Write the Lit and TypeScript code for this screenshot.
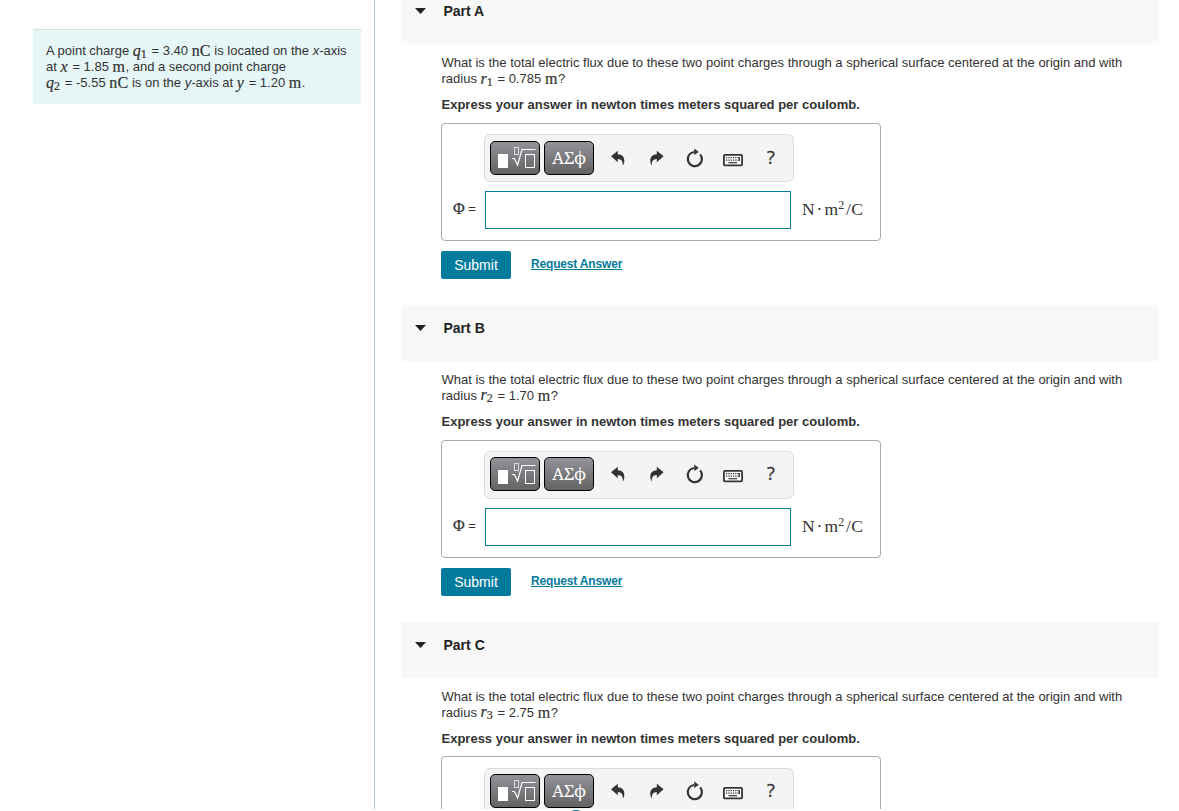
import { LitElement, html, css, svg } from 'lit';
import { customElement, property } from 'lit/decorators.js';

interface Part {
  letter: string;
  index: number;
  radius: string;
}

const PARTS: Part[] = [
  { letter: 'A', index: 1, radius: '0.785' },
  { letter: 'B', index: 2, radius: '1.70' },
  { letter: 'C', index: 3, radius: '2.75' },
];

// toolbar glyphs, all on a 24x24 grid
const ICONS = {
  undo: svg`<path d="M5 10.3 11.8 4.8V8.2C16.2 8.4 18.6 11.2 18.3 15.2 18.2 17 17.7 18.6 16.8 19.6 17 15.4 15.6 13.2 11.8 13V16.2Z" />`,
  redo: svg`<path d="M19.6 10.3 12.8 4.8V8.2C8.4 8.4 6 11.2 6.3 15.2 6.4 17 6.9 18.6 7.8 19.6 7.6 15.4 9 13.2 12.8 13V16.2Z" />`,
  reset: svg`
    <path d="M18.2 8.4A7.1 7.1 0 1 1 12 6" fill="none" stroke="#333" stroke-width="2.2" />
    <path d="M12.2 2.6 16.8 5.9 12.2 9Z" />`,
  keyboard: svg`
    <rect x="2.9" y="8.9" width="18.2" height="10.4" rx="1" fill="#fff" stroke="#333" stroke-width="1.8" />
    <path d="M5 11.7H19M5 14.1H19" stroke="#333" stroke-width="1.2" stroke-dasharray="1.3 1" />
    <path d="M7.5 16.7H16" stroke="#333" stroke-width="1.2" />
    <path d="M18.4 11V15" stroke="#333" stroke-width="1.2" />`,
};

const math = css`
  .math {
    font-family: 'Liberation Serif', serif;
    font-size: 16px;
    line-height: 10px;
    vertical-align: -0.6px;
    -webkit-text-stroke: 0.2px currentColor;
  }
  .math.var {
    padding-right: 1.2px;
  }
  .math.unit-name {
    letter-spacing: 0.2px;
  }
  .math.m {
    letter-spacing: 0.5px;
  }
  .math sub {
    font-size: 12px;
    line-height: 0;
    vertical-align: -2px;
  }
`;

@customElement('math-toolbar')
export class MathToolbar extends LitElement {
  static styles = css`
    :host {
      display: flex;
      box-sizing: border-box;
      width: 310px;
      height: 48px;
      padding: 5.6px 5px;
      border: 1px solid #ddd;
      border-radius: 6px;
      background: #f4f4f4;
    }
    .key {
      box-sizing: border-box;
      flex: none;
      width: 50px;
      height: 34px;
      margin-right: 4px;
      padding: 0;
      border: 1px solid #000;
      border-radius: 5px;
      background: linear-gradient(#92929a, #636363);
      color: #fff;
      font: 17px/30px 'Noto Serif', 'Liberation Serif', serif;
      letter-spacing: -0.2px;
      text-align: center;
    }
    .key svg {
      display: block;
    }
    .tool {
      flex: none;
      width: 38.2px;
      height: 34px;
      display: flex;
      align-items: center;
      justify-content: center;
      color: #333;
      font: 18px 'Open Sans', 'Noto Sans', sans-serif;
    }
    .tool svg {
      fill: #333;
    }
    .tool.first {
      margin-left: 1px;
    }
    .tool.help {
      height: 32px;
      -webkit-text-stroke: 0.3px #333;
    }
  `;

  renderTool(name: keyof typeof ICONS, first = false) {
    return html`<div class="tool ${first ? 'first' : ''}">
      <svg width="24" height="24" viewBox="0 0 24 24">${ICONS[name]}</svg>
    </div>`;
  }

  render() {
    return html`
      <button class="key" aria-label="Templates">
        <svg width="48" height="32" viewBox="0 0 48 32">
          <rect x="7" y="12" width="10" height="14" fill="#fff" />
          <g fill="none" stroke="#fff">
            <rect x="23.5" y="5.5" width="4" height="7" stroke="#ddd" />
            <path d="M21 16.5H23.4L26.6 23 31 7.5H44.5" stroke-width="1.2" />
            <rect x="34.5" y="12.5" width="9" height="13" />
          </g>
        </svg>
      </button>
      <button class="key">ΑΣϕ</button>
      ${this.renderTool('undo', true)} ${this.renderTool('redo')}
      ${this.renderTool('reset')} ${this.renderTool('keyboard')}
      <div class="tool help">?</div>
    `;
  }
}

@customElement('question-part')
export class QuestionPart extends LitElement {
  @property({ attribute: false }) part!: Part;

  static styles = [
    math,
    css`
      :host {
        display: block;
        height: 316.8px;
        color: #333;
      }
      .header {
        display: flex;
        align-items: center;
        box-sizing: border-box;
        height: 56px;
        padding: 0 14px 10px;
        background: #f8f8f8;
        color: #222;
        font-weight: bold;
        font-size: 14px;
      }
      .arrow {
        width: 11px;
        height: 6px;
        margin-right: 17.5px;
        fill: #222;
      }
      .body {
        padding: 11px 0 0 40.5px;
      }
      .question {
        line-height: 16px;
      }
      .question div {
        height: 16px;
        white-space: nowrap;
      }
      .instruction {
        margin: 10px 0 9.8px;
        line-height: 16px;
        font-weight: bold;
        white-space: nowrap;
      }
      .answer {
        box-sizing: border-box;
        width: 440px;
        height: 118px;
        margin-left: -0.5px;
        padding: 10.2px 0 0 11px;
        border: 1px solid #aaa;
        border-radius: 4px;
      }
      .answer math-toolbar {
        margin-left: 31px;
      }
      .entry {
        display: flex;
        align-items: center;
        margin-top: 9.1px;
      }
      .symbol {
        width: 32px;
        padding-bottom: 3px;
        white-space: nowrap;
      }
      .symbol .math {
        vertical-align: -1px;
      }
      .field {
        box-sizing: border-box;
        width: 306px;
        height: 38px;
        padding: 0;
        border: 1px solid #047a9c;
        border-radius: 0;
        background: #fff;
      }
      .unit {
        margin-left: 11px;
        padding-bottom: 1.5px;
        font: 17.5px 'Liberation Serif', serif;
        letter-spacing: 0.25px;
        white-space: nowrap;
      }
      .unit .dot {
        margin: 0 2px 0 1.5px;
      }
      .unit sup {
        margin-right: 1.5px;
        font-size: 12px;
        line-height: 0;
        vertical-align: 6px;
      }
      .actions {
        display: flex;
        margin: 10.4px 0 0 -0.5px;
      }
      .submit {
        width: 70px;
        height: 28px;
        padding: 0;
        border: 0;
        border-radius: 2px;
        background: #047a9c;
        color: #fff;
        font: 14px 'Liberation Sans', sans-serif;
      }
      .request {
        margin: 5px 0 0 20px;
        color: #047a9c;
        font-size: 12px;
        line-height: 16px;
        font-weight: bold;
        letter-spacing: -0.17px;
        text-decoration: underline;
      }
    `,
  ];

  render() {
    const { letter, index, radius } = this.part;
    return html`
      <div class="header">
        <svg class="arrow" viewBox="0 0 11 6"><path d="M0 0H11L5.5 6Z" /></svg>
        Part ${letter}
      </div>
      <div class="body">
        <div class="question">
          <div>What is the total electric flux due to these two point charges through a spherical surface centered at the origin and with</div>
          <div>radius <span class="math var"><i>r</i><sub>${index}</sub></span> = ${radius} <span class="math m">m</span>?</div>
        </div>
        <div class="instruction">Express your answer in newton times meters squared per coulomb.</div>
        <div class="answer">
          <math-toolbar></math-toolbar>
          <div class="entry">
            <div class="symbol"><span class="math">Φ</span> =</div>
            <input class="field" />
            <div class="unit">N<span class="dot">·</span>m<sup>2</sup>/C</div>
          </div>
        </div>
        <div class="actions">
          <button class="submit">Submit</button>
          <a class="request">Request Answer</a>
        </div>
      </div>
    `;
  }
}

@customElement('app-root')
export class AppRoot extends LitElement {
  static styles = [
    math,
    css`
      :host {
        display: block;
        position: relative;
        height: 811px;
        overflow: hidden;
        background: #fff;
        color: #333;
        font: 13px 'Liberation Sans', sans-serif;
      }
      .page {
        display: flex;
        height: 809px;
        overflow: hidden;
      }
      .side {
        box-sizing: border-box;
        width: 375px;
        flex: none;
        padding: 29px 13px 0 33px;
        border-right: 1px solid #b8c9d9;
      }
      .intro {
        box-sizing: border-box;
        height: 75px;
        padding: 13px 0 0 13px;
        border-top: 1px solid #ddd;
        background: #e6f6f7;
        line-height: 16px;
        white-space: nowrap;
      }
      .intro div {
        height: 16px;
      }
      .parts {
        width: 758px;
        margin: -12px 0 0 26px;
      }
      /* floating handle peeking in from the bottom edge */
      .handle {
        position: absolute;
        left: 565px;
        top: 809.5px;
        width: 22px;
        height: 22px;
        border-radius: 50%;
        background: #047a9c;
      }
    `,
  ];

  render() {
    return html`
      <div class="page">
        <div class="side">
          <div class="intro">
            <div>A point charge <span class="math var"><i>q</i><sub>1</sub></span> = 3.40 <span class="math unit-name">nC</span> is located on the <i>x</i>-axis</div>
            <div>at <span class="math var"><i>x</i></span> = 1.85 <span class="math m">m</span>, and a second point charge</div>
            <div><span class="math var"><i>q</i><sub>2</sub></span> = -5.55 <span class="math unit-name">nC</span> is on the <i>y</i>-axis at <span class="math var"><i>y</i></span> = 1.20 <span class="math m">m</span>.</div>
          </div>
        </div>
        <div class="parts">
          ${PARTS.map(part => html`<question-part .part=${part}></question-part>`)}
        </div>
      </div>
      <div class="handle"></div>
    `;
  }
}
